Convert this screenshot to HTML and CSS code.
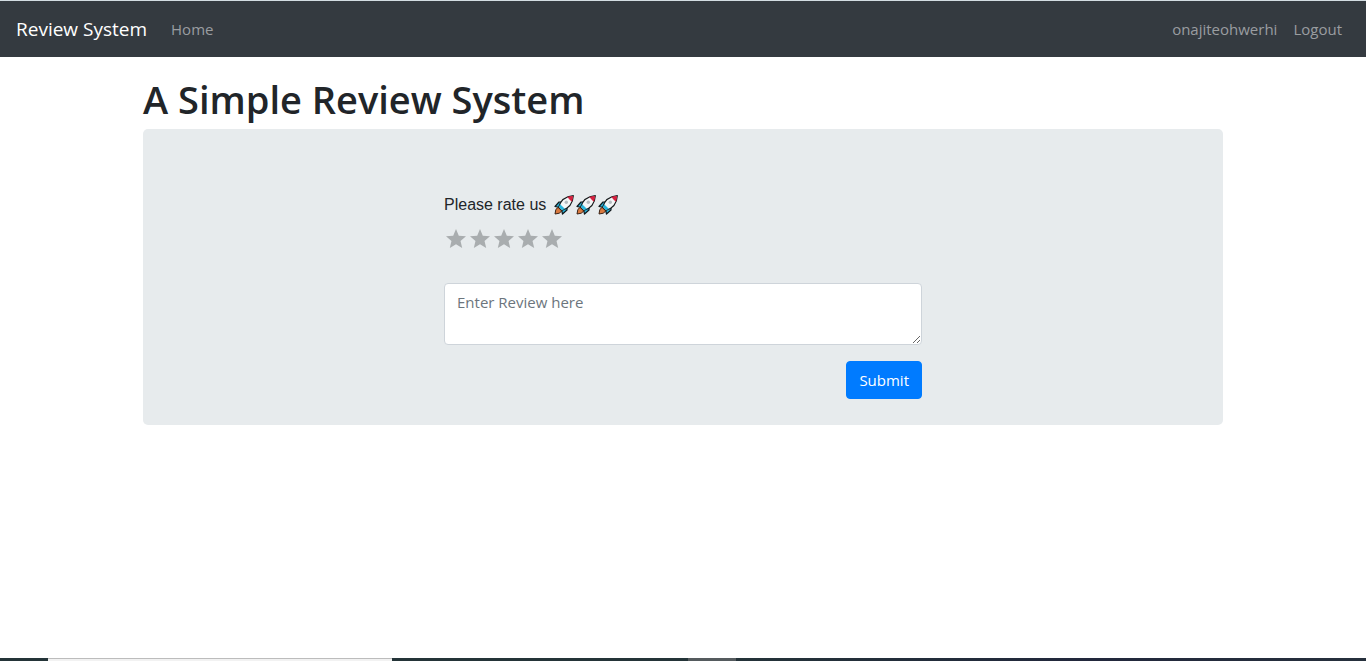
FILE: index.html
```html
<!DOCTYPE html>
<html lang="en">
<head>
<meta charset="utf-8">
<meta name="viewport" content="width=device-width, initial-scale=1">
<title>Review System</title>
<link rel="stylesheet" href="styles.css">
</head>
<body>
<svg class="defs" aria-hidden="true">
  <symbol id="rocket" viewBox="0 0 20 20">
    <path d="M8.500 7H5L1 11.500 5.500 12.500Z" fill="#28b5dc" stroke="#10181c" stroke-width="1.200" stroke-linejoin="round"/>
    <path d="M13 11.500v3.500L8.500 19 7.500 14.500Z" fill="#28b5dc" stroke="#10181c" stroke-width="1.200" stroke-linejoin="round"/>
    <path d="M4.500 12.500C6 7 10.500 1.500 19.300.700 18.800 9.500 13 14 7.500 15.500Z" fill="#f4f6f7" stroke="#15191b" stroke-width="1.200" stroke-linejoin="round"/>
    <path d="M13.300 2.100Q16 1 19 1 19 4 17.900 6.700 15.500 5 13.300 2.100Z" fill="#d6203f"/>
    <path d="M4.900 12.300 7.600 15.100 11 13.900 6.200 9.200Z" fill="#28b5dc"/>
    <path d="M4 12.300Q1 14 1 19 6 19 7.800 16Z" fill="#d9793f" stroke="#2a1a12" stroke-width=".9" stroke-linejoin="round"/>
    <circle cx="12.300" cy="7.300" r="1.700" fill="#b5bcc0"/>
  </symbol>
  <symbol id="star" viewBox="0 0 24 24">
    <path d="M12 17.270 18.180 21l-1.640-7.030L22 9.240l-7.190-.61L12 2 9.190 8.630 2 9.240l5.460 4.730L5.820 21z" fill="currentColor"/>
  </symbol>
</svg>
<header class="navbar">
  <a class="brand" href="#">Review System</a>
  <nav class="nav">
    <a class="nav-link" href="#">Home</a>
    <span class="account">
      <a class="nav-link" href="#">onajiteohwerhi</a>
      <a class="nav-link" href="#">Logout</a>
    </span>
  </nav>
</header>
<main class="container">
  <h1 class="title">A Simple Review System</h1>
  <section class="panel">
    <form class="review-form">
      <p class="prompt">Please rate us
        <span class="rockets" role="img" aria-label="rockets"><svg class="rocket"><use href="#rocket"/></svg><svg class="rocket"><use href="#rocket"/></svg><svg class="rocket"><use href="#rocket"/></svg></span>
      </p>
      <div class="stars">
        <button class="star" type="button" aria-label="1 star"><svg class="star-icon"><use href="#star"/></svg></button>
        <button class="star" type="button" aria-label="2 stars"><svg class="star-icon"><use href="#star"/></svg></button>
        <button class="star" type="button" aria-label="3 stars"><svg class="star-icon"><use href="#star"/></svg></button>
        <button class="star" type="button" aria-label="4 stars"><svg class="star-icon"><use href="#star"/></svg></button>
        <button class="star" type="button" aria-label="5 stars"><svg class="star-icon"><use href="#star"/></svg></button>
      </div>
      <textarea class="review-text" rows="2" placeholder="Enter Review here" aria-label="Review"></textarea>
      <button class="submit" type="submit">Submit</button>
    </form>
  </section>
</main>
<footer class="taskbar" aria-hidden="true">
  <span class="task-search"></span>
  <span class="task-active"></span>
</footer>
</body>
</html>
```
FILE: styles.css
```css
* { box-sizing: border-box; }
body {
  margin: 0;
  min-height: 100vh;
  display: flex;
  flex-direction: column;
  font-family: "Segoe UI", "Open Sans", sans-serif;
  font-size: 15px;
  line-height: 24px;
  color: #212529;
  background: #fff;
}
.defs { position: absolute; width: 0; height: 0; }
.navbar {
  display: flex;
  align-items: center;
  gap: 16px;
  padding: 8px 16px;
  border-top: 1px solid #d3dde2;
  background: #343a40;
}
.brand {
  font-size: 19px;
  line-height: 30px;
  color: #fff;
  text-decoration: none;
}
.nav { flex: 1; display: flex; justify-content: space-between; }
.account { display: flex; }
.nav-link { padding: 8px; color: #9a9da0; text-decoration: none; }
.container {
  width: 100%;
  max-width: 1140px;
  margin: 0 auto;
  padding: 18px 30px;
}
.title {
  margin: 0 0 6px;
  font-size: 38px;
  line-height: 48px;
  font-weight: 600;
}
.panel {
  padding: 64px 32px 26px;
  border-radius: 5px;
  background: #e7ebed;
}
.review-form {
  display: flex;
  flex-direction: column;
  max-width: 478px;
  margin: 0 auto;
}
.prompt {
  display: flex;
  align-items: center;
  gap: 8px;
  margin: 0 0 10px;
  font-family: "Liberation Sans", Arial, sans-serif;
  font-size: 16px;
}
.rockets { display: flex; gap: 2px; }
.rocket { width: 20px; height: 20px; }
.stars { display: flex; margin-bottom: 32px; }
.star {
  width: 24px;
  height: 24px;
  padding: 0;
  border: 0;
  background: none;
  color: #a9adaf;
}
.star-icon { display: block; width: 24px; height: 24px; }
.review-text {
  width: 100%;
  height: 62px;
  padding: 6px 12px;
  border: 1px solid #ced4da;
  border-radius: 4px;
  font: inherit;
  color: #495057;
  background: #fff;
  resize: vertical;
}
.review-text::placeholder { color: #6c757d; opacity: 1; }
.submit {
  align-self: flex-end;
  margin-top: 16px;
  padding: 6px 12px;
  border: 1px solid #007bff;
  border-radius: 4px;
  font: inherit;
  color: #fff;
  background: #007bff;
}
.taskbar {
  display: grid;
  grid-template-columns: 48px 344px 296px 48px 1fr;
  height: 3px;
  margin-top: auto;
  background: linear-gradient(90deg, #243438 50%, #22283c 80%, #26303c);
}
.task-search { grid-column: 2; border-top: 1px solid #bcbcbc; background: #f2f2f2; }
.task-active { grid-column: 4; background: #555b5e; }
```
